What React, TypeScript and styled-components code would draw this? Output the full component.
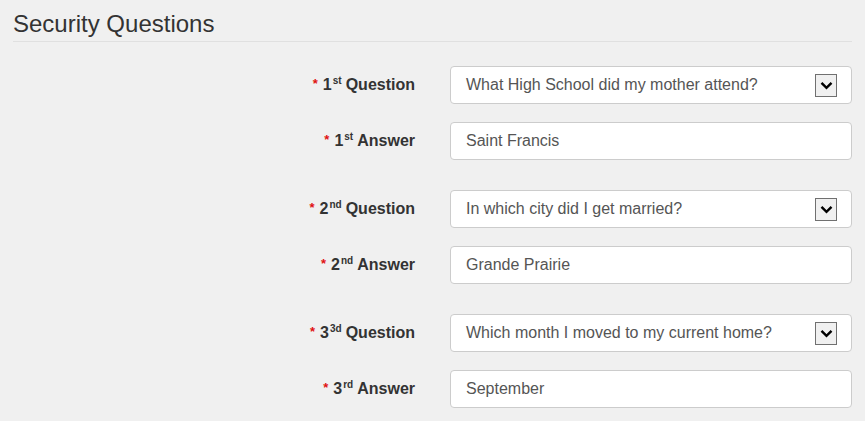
import React from "react";
import styled, { createGlobalStyle } from "styled-components";

const GlobalStyle = createGlobalStyle`
  html, body {
    margin: 0;
    padding: 0;
    background: #f0f0f0;
    font-family: "Liberation Sans", Arial, sans-serif;
  }
`;

const Page = styled.div`
  padding: 0 13px;
`;

const Title = styled.h2`
  margin: 0;
  padding-top: 10px;
  font-size: 24px;
  font-weight: normal;
  line-height: 28px;
  color: #333;
  padding-bottom: 3px;
  border-bottom: 1px solid #e0e0e0;
`;

const Form = styled.div`
  display: flex;
  flex-direction: column;
  gap: 30px;
  padding-top: 24px;
`;

const Group = styled.div`
  display: flex;
  flex-direction: column;
  gap: 18px;
`;

const Row = styled.div`
  display: grid;
  grid-template-columns: 1fr 402px;
  column-gap: 35px;
  align-items: center;
`;

const Label = styled.label`
  text-align: right;
  font-size: 16px;
  font-weight: bold;
  color: #333;
  white-space: nowrap;
`;

const Star = styled.span`
  color: #e01010;
  font-size: 13px;
  margin-right: 5px;
  position: relative;
  top: -2px;
`;

const Sup = styled.sup`
  font-size: 10px;
  line-height: 0;
  margin-right: 4px;
  margin-left: 1px;
`;

const Field = styled.div`
  box-sizing: border-box;
  height: 38px;
  display: flex;
  align-items: center;
  justify-content: space-between;
  background: #fff;
  border: 1px solid #ccc;
  border-radius: 4px;
  padding: 0 14px 0 15px;
  font-size: 16px;
  color: #555;
`;

const ArrowBox = styled.span`
  box-sizing: border-box;
  width: 22px;
  height: 23px;
  display: flex;
  align-items: center;
  justify-content: center;
  background: #f0f0f0;
  border: 1px solid #707070;
`;

const Chevron = () => (
  <svg width="13" height="9" viewBox="0 0 13 9">
    <path d="M1.5 1.8 L6.5 6.8 L11.5 1.8" fill="none" stroke="#000" strokeWidth="2.4" />
  </svg>
);

type Item = { num: string; sup: string; sup2: string; question: string; answer: string };

const items: Item[] = [
  { num: "1", sup: "st", sup2: "st", question: "What High School did my mother attend?", answer: "Saint Francis" },
  { num: "2", sup: "nd", sup2: "nd", question: "In which city did I get married?", answer: "Grande Prairie" },
  { num: "3", sup: "3d", sup2: "rd", question: "Which month I moved to my current home?", answer: "September" },
];

export default function App() {
  return (
    <>
      <GlobalStyle />
      <Page>
        <Title>Security Questions</Title>
        <Form>
          {items.map((it) => (
            <Group key={it.num}>
              <Row>
                <Label>
                  <Star>*</Star>
                  {it.num}
                  <Sup>{it.sup}</Sup>Question
                </Label>
                <Field>
                  <span>{it.question}</span>
                  <ArrowBox>
                    <Chevron />
                  </ArrowBox>
                </Field>
              </Row>
              <Row>
                <Label>
                  <Star>*</Star>
                  {it.num}
                  <Sup>{it.sup2}</Sup>Answer
                </Label>
                <Field>{it.answer}</Field>
              </Row>
            </Group>
          ))}
        </Form>
      </Page>
    </>
  );
}
